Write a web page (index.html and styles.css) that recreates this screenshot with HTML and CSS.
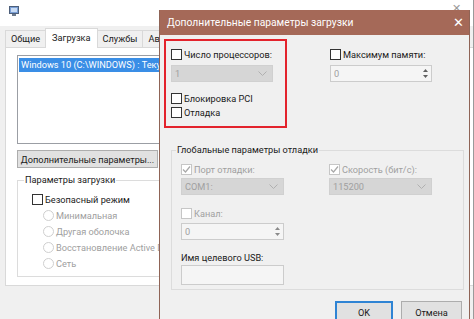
FILE: index.html
```html
<!DOCTYPE html>
<html>
<head>
    <meta charset="utf-8">
    <title>Конфигурация системы</title>
    <link rel="stylesheet" href="styles.css">
</head>
<body>
    <div class="window">
        <div class="window_title">
            <svg class="app_icon" width="10" height="11" viewBox="0 0 10 11">
                <rect x="0.5" y="0.5" width="9" height="7" fill="#7a9fd6" stroke="#4d5f7a"/>
                <rect x="2" y="2" width="6" height="4" fill="#c9dcf5"/>
                <rect x="3" y="8" width="4" height="2" fill="#6d7a8c"/>
            </svg>
            <span class="window_close">&#x2715;</span>
        </div>
        <div class="tabs">
            <span class="tab">Общие</span>
            <span class="tab tab_active">Загрузка</span>
            <span class="tab">Службы</span>
            <span class="tab">Автозагрузка</span>
        </div>
        <div class="panel">
            <div class="listbox">
                <div class="list_item">Windows 10 (C:\WINDOWS) : Текущая ОС; ОС по умолчанию</div>
            </div>
            <button type="button" class="btn btn_advanced">Дополнительные параметры...</button>
            <fieldset class="boot_group">
                <legend>Параметры загрузки</legend>
                <div class="check safe_mode"><span class="box"></span>Безопасный режим</div>
                <div class="radio"><span class="circle"></span>Минимальная</div>
                <div class="radio"><span class="circle"></span>Другая оболочка</div>
                <div class="radio"><span class="circle"></span>Восстановление Active Directory</div>
                <div class="radio"><span class="circle"></span>Сеть</div>
            </fieldset>
        </div>
    </div>

    <div class="dialog">
        <div class="dialog_title">
            <span>Дополнительные параметры загрузки</span>
            <span class="dialog_close">&#x2715;</span>
        </div>
        <div class="dialog_body">
            <div class="top_row">
                <div class="highlight">
                    <div class="check"><span class="box"></span>Число процессоров:</div>
                    <div class="select disabled cpu_select">1<svg width="9" height="5" viewBox="0 0 9 5"><polyline points="0.5,0.5 4.5,4.5 8.5,0.5" fill="none" stroke="#b0b0b0"/></svg></div>
                    <div class="check pci"><span class="box"></span>Блокировка PCI</div>
                    <div class="check"><span class="box"></span>Отладка</div>
                </div>
                <div class="memory_col">
                    <div class="check"><span class="box"></span>Максимум памяти:</div>
                    <div class="spin mem_spin">0<svg width="5" height="9" viewBox="0 0 5 9"><polygon points="2.5,0 5,3 0,3" fill="#606060"/><polygon points="0,6 5,6 2.5,9" fill="#606060"/></svg></div>
                </div>
            </div>

            <fieldset class="debug_group">
                <legend>Глобальные параметры отладки</legend>
                <div class="debug_cols">
                    <div class="debug_col">
                        <div class="check off"><span class="box checked"><svg width="9" height="9" viewBox="0 0 9 9"><polyline points="1,4.5 3.5,7 8,1.5" fill="none" stroke="#a8a8a8" stroke-width="1.2"/></svg></span>Порт отладки:</div>
                        <div class="select disabled port_select">COM1:<svg width="9" height="5" viewBox="0 0 9 5"><polyline points="0.5,0.5 4.5,4.5 8.5,0.5" fill="none" stroke="#b0b0b0"/></svg></div>
                        <div class="check off channel"><span class="box"></span>Канал:</div>
                        <div class="spin channel_spin">0<svg width="5" height="9" viewBox="0 0 5 9"><polygon points="2.5,0 5,3 0,3" fill="#8a8a8a"/><polygon points="0,6 5,6 2.5,9" fill="#8a8a8a"/></svg></div>
                        <div class="usb_label">Имя целевого USB:</div>
                        <div class="text_input"></div>
                    </div>
                    <div class="debug_col">
                        <div class="check off"><span class="box checked"><svg width="9" height="9" viewBox="0 0 9 9"><polyline points="1,4.5 3.5,7 8,1.5" fill="none" stroke="#a8a8a8" stroke-width="1.2"/></svg></span>Скорость (бит/с):</div>
                        <div class="select disabled port_select">115200<svg width="9" height="5" viewBox="0 0 9 5"><polyline points="0.5,0.5 4.5,4.5 8.5,0.5" fill="none" stroke="#b0b0b0"/></svg></div>
                    </div>
                </div>
            </fieldset>

            <div class="dialog_buttons">
                <button type="button" class="btn btn_ok">OK</button>
                <button type="button" class="btn btn_cancel">Отмена</button>
            </div>
        </div>
    </div>
</body>
</html>
```

FILE: styles.css
```css
body {
    margin: 0;
    width: 474px;
    height: 319px;
    overflow: hidden;
    background-color: #f0f0f0;
    font-family: Roboto, "Noto Sans", sans-serif;
    font-size: 9.2px;
    color: #1a1a1a;
}

/* background window */
.window {
    width: 473px;
    height: 319px;
    border-right: 1px solid #9a9a9a;
    overflow: hidden;
}
.window_title {
    height: 26px;
    background-color: #ffffff;
    display: flex;
    justify-content: space-between;
    align-items: flex-start;
    padding: 6px 12px 0 9px;
    box-sizing: border-box;
}
.window_close {
    color: #9a9a9a;
    font-size: 11px;
    line-height: 6px;
}
.tabs {
    display: flex;
    align-items: flex-end;
    height: 21px;
    padding-left: 5px;
}
.tab {
    height: 16px;
    line-height: 15px;
    padding: 0 5px;
    border: 1px solid #d9d9d9;
    border-bottom: none;
    margin-right: -1px;
    background-color: #f0f0f0;
}
.tab_active {
    height: 19px;
    line-height: 17px;
    padding: 0 6px;
    background-color: #ffffff;
    position: relative;
    margin-bottom: -1px;
}
.panel {
    width: 520px;
    height: 239px;
    margin-left: 5px;
    background-color: #ffffff;
    border: 1px solid #d9d9d9;
    box-sizing: border-box;
    padding: 7px 0 0 11px;
}
/* everything right of x=159 lies under the dialog, so it is clipped there */
.listbox {
    width: 142px;
    height: 89px;
    border: 1px solid #9b9ea4;
    border-right: none;
    box-sizing: border-box;
    padding: 2px 0 2px 1px;
    overflow: hidden;
}
.list_item {
    height: 14px;
    line-height: 14px;
    padding-left: 2px;
    background-color: #3a8ee6;
    color: #ffffff;
    white-space: nowrap;
    overflow: hidden;
}
.btn {
    font-family: inherit;
    font-size: 9.2px;
    color: #1a1a1a;
    background-color: #e1e1e1;
    border: 1px solid #adadad;
    padding: 0;
    white-space: nowrap;
}
.btn_advanced {
    display: block;
    width: 141px;
    height: 18px;
    margin-top: 6px;
}
.boot_group {
    width: 142px;
    height: 104px;
    margin: 5px 0 0 0;
    padding: 4px 0 0 6px;
    border: 1px solid #dcdcdc;
    border-right: none;
    box-sizing: border-box;
    overflow: hidden;
}
.boot_group legend,
.debug_group legend {
    padding: 0 1px;
    line-height: 14px;
}

/* checkboxes and radios */
.check {
    display: flex;
    align-items: center;
    height: 14px;
    white-space: nowrap;
}
.box {
    width: 11px;
    height: 11px;
    border: 1px solid #333333;
    background-color: #ffffff;
    box-sizing: border-box;
    margin-right: 2px;
    flex-shrink: 0;
    display: flex;
    align-items: center;
    justify-content: center;
}
.check.off {
    color: #a0a0a0;
}
.check.off .box {
    border-color: #c6c6c6;
}
.safe_mode {
    height: 16px;
    margin-left: 8px;
}
.radio {
    display: flex;
    align-items: center;
    height: 16px;
    margin-left: 19px;
    color: #a0a0a0;
    white-space: nowrap;
}
.circle {
    width: 11px;
    height: 11px;
    border: 1px solid #cfcfcf;
    border-radius: 50%;
    box-sizing: border-box;
    margin-right: 2px;
    flex-shrink: 0;
}

/* dialog */
.dialog {
    position: absolute;
    left: 159px;
    top: 10px;
    width: 311px;
    height: 320px;
    border: 1px solid #8f6456;
    border-top: none;
    box-sizing: border-box;
    background-color: #f0f0f0;
}
.dialog_title {
    height: 25px;
    background-color: #a56958;
    color: #ffffff;
    font-size: 10.3px;
    display: flex;
    justify-content: space-between;
    align-items: center;
    padding: 0 6px 0 7px;
}
.dialog_close {
    font-size: 13px;
    width: 10px;
}
.dialog_body {
    padding: 4px 0 0 4px;
}
.top_row {
    display: flex;
}
.highlight {
    width: 123px;
    height: 89px;
    border: 2px solid #e3232c;
    box-sizing: border-box;
    padding: 6px 0 0 5px;
}
.select,
.spin {
    display: flex;
    justify-content: space-between;
    align-items: center;
    box-sizing: border-box;
    height: 17px;
    padding: 0 5px 0 3px;
    color: #a0a0a0;
}
.select.disabled {
    background-color: #d6d6d6;
    border: 1px solid #d0d0d0;
}
.spin {
    background-color: #f5f5f5;
    border: 1px solid #cccccc;
    padding-right: 3px;
}
.cpu_select {
    width: 102px;
    margin-top: 4px;
}
.pci {
    margin-top: 9px;
}
.memory_col {
    margin-left: 43px;
    padding-top: 8px;
}
.mem_spin {
    width: 102px;
    margin-top: 4px;
}
.debug_group {
    width: 293px;
    height: 147px;
    margin: 15px 0 0 7px;
    padding: 5px 0 0 4px;
    border: 1px solid #dcdcdc;
    box-sizing: border-box;
}
.debug_cols {
    display: flex;
    gap: 45px;
    margin-left: 5px;
}
.debug_col {
    width: 103px;
}
.port_select {
    margin-top: 2px;
}
.channel {
    margin-top: 11px;
}
.channel_spin {
    margin-top: 3px;
}
.usb_label {
    height: 14px;
    line-height: 14px;
    margin-top: 11px;
    white-space: nowrap;
}
.text_input {
    height: 20px;
    background-color: #f5f5f5;
    border: 1px solid #cccccc;
    box-sizing: border-box;
}
.dialog_buttons {
    display: flex;
    justify-content: flex-end;
    gap: 8px;
    margin-top: 11px;
    padding-right: 7px;
}
.btn_ok {
    width: 58px;
    height: 23px;
    border: 2px solid #2f84d4;
}
.btn_cancel {
    width: 61px;
    height: 23px;
}
```
